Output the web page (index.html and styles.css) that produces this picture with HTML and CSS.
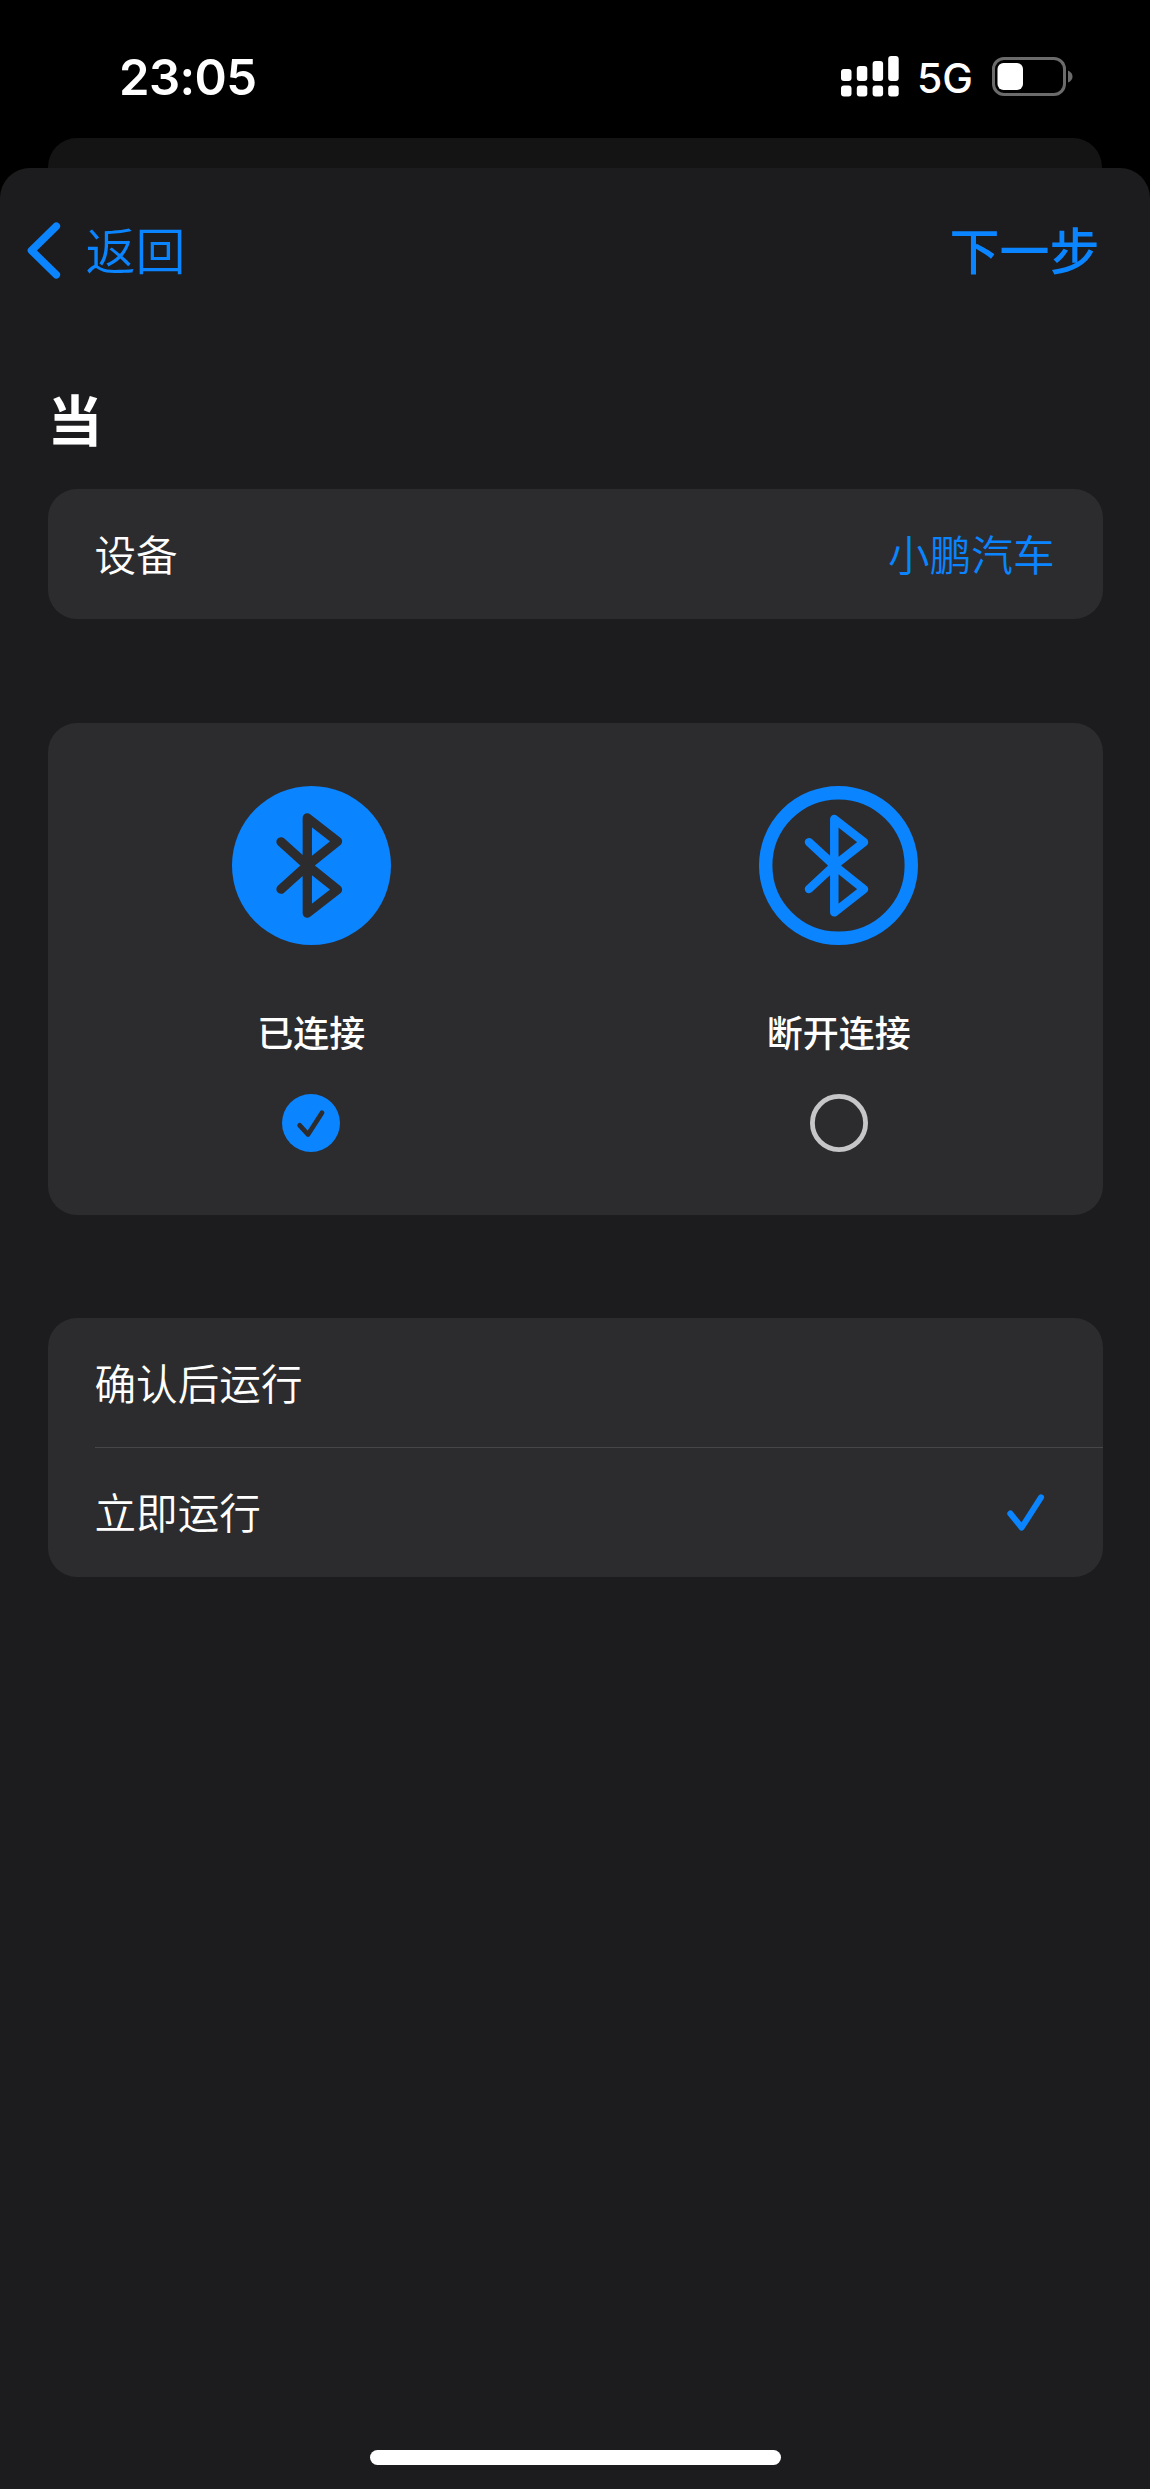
FILE: index.html
```html
<!DOCTYPE html>
<html lang="zh-CN">

<head>
    <meta charset="UTF-8">
    <meta name="viewport" content="width=device-width, initial-scale=1">
    <title>当</title>
    <link rel="stylesheet" href="styles.css">
</head>

<body>

    <header class="status-bar">
        <span class="time">23:05</span>
        <div class="status-icons">
            <svg class="signal" width="58" height="41" viewBox="0 0 58 41" fill="#fff">
                <rect x="0" y="13" width="10.5" height="12" rx="3"/>
                <rect x="15.8" y="10" width="10.5" height="15" rx="3"/>
                <rect x="31.6" y="5" width="10.5" height="20" rx="3"/>
                <rect x="47.2" y="0" width="10.5" height="25" rx="3"/>
                <rect x="0" y="29.5" width="10.5" height="11" rx="3"/>
                <rect x="15.8" y="29.5" width="10.5" height="11" rx="3"/>
                <rect x="31.6" y="29.5" width="10.5" height="11" rx="3"/>
                <rect x="47.2" y="29.5" width="10.5" height="11" rx="3"/>
            </svg>
            <span class="network">5G</span>
            <svg class="battery" width="82" height="39" viewBox="0 0 82 39">
                <rect x="1.5" y="1.5" width="71" height="36" rx="10.5" fill="none" stroke="#6b6b6b" stroke-width="3"/>
                <rect x="5.5" y="6" width="25.5" height="27" rx="6" fill="#fff"/>
                <path d="M76 13.5 Q80.5 15.5 80.5 19.5 T76 25.5 Z" fill="#6b6b6b"/>
            </svg>
        </div>
    </header>

    <div class="back-sheet"></div>

    <main class="sheet">
        <nav class="nav">
            <a class="back">
                <svg width="34" height="57" viewBox="0 0 34 57" fill="none" stroke="#0a84ff" stroke-width="7.6" stroke-linecap="round" stroke-linejoin="round">
                    <path d="M29.3 4.2 L4.5 28.5 L29.3 52.8"/>
                </svg>
                <span>返回</span>
            </a>
            <a class="next">下一步</a>
        </nav>

        <h1>当</h1>

        <section class="card row">
            <span>设备</span>
            <span class="value">小鹏汽车</span>
        </section>

        <section class="card options">
            <div class="option">
                <svg width="159" height="159" viewBox="0 0 159 159">
                    <circle cx="79.5" cy="79.5" r="79.5" fill="#0a84ff"/>
                    <path d="M49 55.8 L75.3 79.5 L105.5 103.7 L75.3 127.2 V31.8 L105.5 55.3 L75.3 79.5 L49 103.2" fill="none" stroke="#2c2c2e" stroke-width="9.3" stroke-linecap="round" stroke-linejoin="round"/>
                </svg>
                <span class="label">已连接</span>
                <svg class="radio" width="58" height="58" viewBox="0 0 58 58">
                    <circle cx="29" cy="29" r="29" fill="#0a84ff"/>
                    <path d="M17.7 31.3 L26 40.5 L40 18.8" fill="none" stroke="#2c2c2e" stroke-width="4.8" stroke-linecap="round" stroke-linejoin="round"/>
                </svg>
            </div>
            <div class="option">
                <svg width="159" height="159" viewBox="0 0 159 159" fill="none" stroke="#0a84ff">
                    <circle cx="79.5" cy="79.5" r="72.8" stroke-width="13.4"/>
                    <path d="M50 56.2 L75.3 79.5 L105 103.2 L75.3 126.3 V33 L105 56.2 L75.3 79.5 L50 103" stroke-width="8.5" stroke-linecap="round" stroke-linejoin="round"/>
                </svg>
                <span class="label">断开连接</span>
                <svg class="radio" width="58" height="58" viewBox="0 0 58 58">
                    <circle cx="29" cy="29" r="26.6" fill="none" stroke="#c6c6c8" stroke-width="4.8"/>
                </svg>
            </div>
        </section>

        <section class="card list">
            <div class="row">
                <span>确认后运行</span>
            </div>
            <div class="divider"></div>
            <div class="row">
                <span>立即运行</span>
                <svg class="check" width="38" height="38" viewBox="0 0 38 38" fill="none" stroke="#0a84ff" stroke-width="6" stroke-linecap="round" stroke-linejoin="round">
                    <path d="M3.3 20.5 L14.7 34.5 L34 4.3"/>
                </svg>
            </div>
        </section>

        <div class="home-indicator"></div>
    </main>

</body>

</html>
```
FILE: styles.css
```css
*{
    padding: 0;
    margin: 0;
    box-sizing: border-box;
}

body{
    height: 2489px;
    display: flex;
    flex-direction: column;
    background-color: #000;
    color: #fff;
    font-family: "Noto Sans CJK SC", sans-serif;
    font-size: 41.6px;
    font-weight: 350;
}

svg{
    display: block;
    flex-shrink: 0;
}

.status-bar{
    height: 138px;
    padding: 15px 76px 0 119px;
    display: flex;
    justify-content: space-between;
    align-items: center;
    font-family: Inter, sans-serif;
    line-height: 1;
}

.time{
    margin-top: 1px;
    font-size: 49px;
    font-weight: 600;
    letter-spacing: -0.6px;
}

.status-icons{
    display: flex;
    align-items: center;
}

.network{
    margin: 3px 19px 0 18px;
    font-size: 41px;
    font-weight: 500;
}

.back-sheet{
    height: 30px;
    margin: 0 48px;
    border-radius: 29px 29px 0 0;
    background-color: #141414;
}

.sheet{
    flex: 1;
    display: flex;
    flex-direction: column;
    border-radius: 30px 30px 0 0;
    padding: 0 47.5px;
    background-color: #1c1c1e;
}

.nav{
    height: 165px;
    margin: 0 -21px;
    display: flex;
    justify-content: space-between;
    align-items: center;
    font-size: 50px;
    line-height: 1;
    color: #0a84ff;
}

.back{
    display: flex;
    align-items: center;
    gap: 25px;
}

.back span{
    padding-bottom: 6px;
}

.next{
    margin-right: 24px;
    padding-bottom: 6px;
    font-weight: 500;
}

h1{
    height: 156px;
    padding: 54px 0 0;
    font-size: 55px;
    font-weight: 700;
    line-height: 60px;
}

.card{
    border-radius: 29px;
    background-color: #2c2c2e;
}

.row{
    height: 129.5px;
    padding: 0 48px 0 47px;
    display: flex;
    justify-content: space-between;
    align-items: center;
}

.row span{
    padding-bottom: 2px;
}

.row.card{
    flex-shrink: 0;
    height: 130px;
}

.value{
    color: #0a84ff;
}

.options{
    height: 492px;
    margin: 104px 0 103px;
    display: grid;
    grid-template-columns: 1fr 1fr;
}

.option{
    padding-top: 62.5px;
    display: flex;
    flex-direction: column;
    align-items: center;
}

.label{
    margin: 56px 0 33px;
    font-size: 36px;
    font-weight: 500;
    line-height: 60px;
}

.divider{
    height: 1px;
    margin: -0.5px 0 -0.5px 47px;
    background-color: #464648;
}

.check{
    margin-right: 10px;
}

.home-indicator{
    width: 411px;
    height: 15px;
    margin: auto auto 24px;
    border-radius: 8px;
    background-color: #fff;
}
```
